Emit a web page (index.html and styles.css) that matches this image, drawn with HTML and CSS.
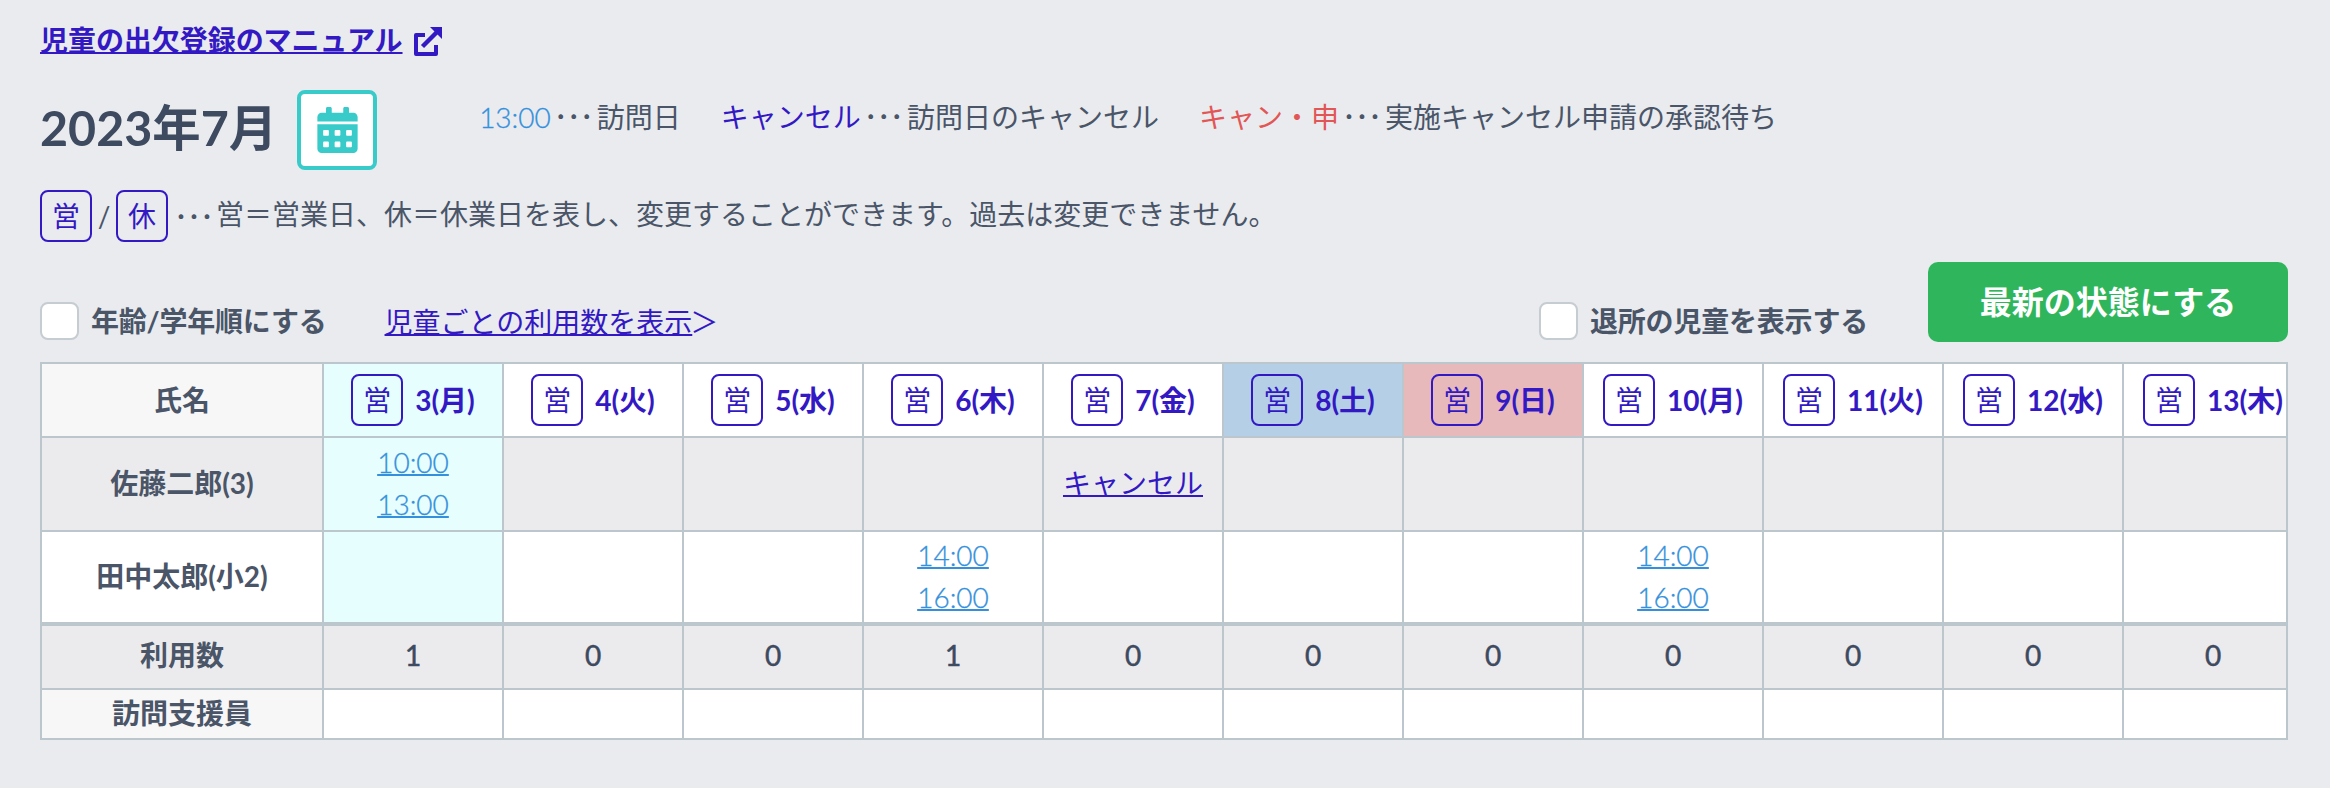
FILE: index.html
```html
<!DOCTYPE html>
<html lang="ja">
<head>
<meta charset="utf-8">
<title>児童の出欠登録</title>
<link rel="stylesheet" href="styles.css">
</head>
<body>
<main class="page">
  <div class="manual-row">
    <a class="manual-link" href="#">児童の出欠登録のマニュアル</a>
    <svg class="ext-icon" viewBox="0 0 29 29" aria-hidden="true"><path d="M12 8H3v19h20v-9" fill="none" stroke="currentColor" stroke-width="4" stroke-linejoin="round"/><path d="M9.500 19.500 24 5" fill="none" stroke="currentColor" stroke-width="4.500"/><path d="M17 0h12v12z" fill="currentColor"/></svg>
  </div>
  <div class="title-row">
    <h1 class="month">2023年7月</h1>
    <button class="cal-btn" type="button">
      <svg class="cal-icon" viewBox="0 0 448 512" aria-hidden="true"><path fill="currentColor" d="M0 464c0 26.5 21.5 48 48 48h352c26.5 0 48-21.5 48-48V192H0v272zm320-196c0-6.600 5.400-12 12-12h40c6.600 0 12 5.400 12 12v40c0 6.600-5.400 12-12 12h-40c-6.600 0-12-5.400-12-12v-40zm0 128c0-6.600 5.400-12 12-12h40c6.600 0 12 5.400 12 12v40c0 6.600-5.400 12-12 12h-40c-6.600 0-12-5.400-12-12v-40zM192 268c0-6.600 5.400-12 12-12h40c6.600 0 12 5.400 12 12v40c0 6.600-5.400 12-12 12h-40c-6.600 0-12-5.400-12-12v-40zm0 128c0-6.600 5.400-12 12-12h40c6.600 0 12 5.400 12 12v40c0 6.600-5.400 12-12 12h-40c-6.600 0-12-5.400-12-12v-40zM64 268c0-6.600 5.400-12 12-12h40c6.600 0 12 5.400 12 12v40c0 6.600-5.400 12-12 12H76c-6.600 0-12-5.400-12-12v-40zm0 128c0-6.600 5.400-12 12-12h40c6.600 0 12 5.400 12 12v40c0 6.600-5.400 12-12 12H76c-6.600 0-12-5.400-12-12v-40zM400 64h-48V16c0-8.800-7.200-16-16-16h-32c-8.800 0-16 7.200-16 16v48H160V16c0-8.800-7.200-16-16-16h-32c-8.800 0-16 7.200-16 16v48H48C21.500 64 0 85.500 0 112v48h448v-48c0-26.500-21.500-48-48-48z"/></svg>
    </button>
    <div class="legend">
      <span class="item"><span class="time">13:00</span><span class="dots">･･･</span>訪問日</span>
      <span class="item"><span class="cancel">キャンセル</span><span class="dots">･･･</span>訪問日のキャンセル</span>
      <span class="item"><span class="pending">キャン・申</span><span class="dots">･･･</span>実施キャンセル申請の承認待ち</span>
    </div>
  </div>
  <div class="note-row">
    <span class="badge">営</span><span class="slash">/</span><span class="badge">休</span><span class="dots dots-note">･･･</span><span class="note">営＝営業日、休＝休業日を表し、変更することができます。過去は変更できません。</span>
  </div>
  <div class="toolbar">
    <div class="tool-left">
      <label class="check"><span class="box"></span>年齢/学年順にする</label>
      <a class="count-link" href="#"><span class="count-text">児童ごとの利用数を表示</span><span class="count-arrow">＞</span></a>
    </div>
    <div class="tool-right">
      <label class="check"><span class="box"></span>退所の児童を表示する</label>
      <button class="refresh" type="button">最新の状態にする</button>
    </div>
  </div>
  <div class="sheet-wrap">
  <table class="sheet">
    <colgroup><col class="c-name"><col class="c-day"><col class="c-day"><col class="c-day"><col class="c-day"><col class="c-day"><col class="c-day"><col class="c-day"><col class="c-day"><col class="c-day"><col class="c-day"><col class="c-day"></colgroup>
    <thead>
      <tr class="r-head">
        <th class="name head-name">氏名</th>
        <th class="today"><div class="day"><span class="badge">営</span><span>3(月)</span></div></th>
        <th><div class="day"><span class="badge">営</span><span>4(火)</span></div></th>
        <th><div class="day"><span class="badge">営</span><span>5(水)</span></div></th>
        <th><div class="day"><span class="badge">営</span><span>6(木)</span></div></th>
        <th><div class="day"><span class="badge">営</span><span>7(金)</span></div></th>
        <th class="sat"><div class="day"><span class="badge">営</span><span>8(土)</span></div></th>
        <th class="sun"><div class="day"><span class="badge">営</span><span>9(日)</span></div></th>
        <th><div class="day"><span class="badge">営</span><span>10(月)</span></div></th>
        <th><div class="day"><span class="badge">営</span><span>11(火)</span></div></th>
        <th><div class="day"><span class="badge">営</span><span>12(水)</span></div></th>
        <th><div class="day"><span class="badge">営</span><span>13(木)</span></div></th>
      </tr>
    </thead>
    <tbody>
      <tr class="r-one grey">
        <th class="name">佐藤二郎(3)</th>
        <td class="today"><a class="slot" href="#">10:00</a><a class="slot" href="#">13:00</a></td>
        <td></td><td></td><td></td>
        <td><a class="slot-cancel" href="#">キャンセル</a></td>
        <td></td><td></td><td></td><td></td><td></td><td></td>
      </tr>
      <tr class="r-two">
        <th class="name">田中太郎(小2)</th>
        <td class="today"></td><td></td><td></td>
        <td><a class="slot" href="#">14:00</a><a class="slot" href="#">16:00</a></td>
        <td></td><td></td><td></td>
        <td><a class="slot" href="#">14:00</a><a class="slot" href="#">16:00</a></td>
        <td></td><td></td><td></td>
      </tr>
      <tr class="r-count grey">
        <th class="name">利用数</th>
        <td>1</td><td>0</td><td>0</td><td>1</td><td>0</td><td>0</td><td>0</td><td>0</td><td>0</td><td>0</td><td>0</td>
      </tr>
      <tr class="r-staff">
        <th class="name head-name">訪問支援員</th>
        <td></td><td></td><td></td><td></td><td></td><td></td><td></td><td></td><td></td><td></td><td></td>
      </tr>
    </tbody>
  </table>
  </div>
</main>
</body>
</html>
```

FILE: styles.css
```css
* { box-sizing: border-box; }
html, body { margin: 0; padding: 0; }
body {
  background: #e9ebef;
  color: #4a5568;
  font-family: Lato, "Noto Sans CJK JP", sans-serif;
  font-size: 28px;
  line-height: 1.5;
}
a { color: inherit; text-decoration-thickness: 2px; }
.page { padding: 20px 42px 0 40px; height: 788px; overflow: hidden; }

.manual-row { display: flex; align-items: center; gap: 10px; height: 40px; color: #3319c4; }
.manual-link { font-weight: 700; font-size: 28px; line-height: 40px; letter-spacing: -0.05px; }
.ext-icon { width: 29px; height: 29px; flex: none; margin-top: 2px; }

.title-row { display: flex; align-items: flex-start; margin-top: 30px; }
.month { margin: 0; font-size: 48.4px; line-height: 74px; font-weight: 700; color: #3d4a5f; white-space: nowrap; }
.cal-btn {
  width: 80px; height: 80px; margin-left: 20px; padding: 0;
  display: flex; align-items: center; justify-content: center;
  background: #fff; border: 4px solid #38cbc9; border-radius: 8px; color: #38cbc9;
}
.cal-icon { width: 41px; height: 46px; }
.legend { display: flex; gap: 40px; margin-left: 102px; line-height: 52px; white-space: nowrap; }
.time { color: #3490dc; font-weight: 300; -webkit-text-stroke: 0.3px #3490dc; }
.cancel { color: #3319c4; }
.pending { color: #e25656; }
.dots { font-family: "Noto Sans CJK JP", sans-serif; margin: 0 4px 0 3px; letter-spacing: -1px; }

.note-row { display: flex; align-items: center; height: 52px; margin-top: 20px; }
.badge {
  display: inline-flex; align-items: center; justify-content: center;
  width: 52px; height: 52px; flex: none;
  border: 2px solid #3319c4; border-radius: 8px;
  color: #3319c4; font-size: 28px; font-weight: 400; line-height: 1;
}
.slash { width: 24px; text-align: center; font-weight: 400; }
.dots-note { margin: 0 3px 0 6px; }
.note { line-height: 48px; margin-bottom: 4px; }

.toolbar { display: flex; justify-content: space-between; align-items: flex-end; height: 80px; margin-top: 20px; }
.tool-left, .tool-right { display: flex; align-items: flex-end; }
.tool-left { padding-bottom: 2px; }
.tool-left .count-link { margin-left: 58px; }
.tool-right .check { margin-bottom: 2px; margin-right: 60px; }
.check { display: flex; align-items: center; gap: 12px; height: 38px; font-weight: 700; line-height: 34px; color: #4a5568; letter-spacing: -0.2px; }
.box { width: 39px; height: 38px; background: #fff; border: 2px solid #c5ccd2; border-radius: 8px; flex: none; }
.count-link { color: #3319c4; line-height: 36px; text-decoration: none; white-space: nowrap; display: flex; }
.count-text { text-decoration: underline; text-decoration-thickness: 2px; }
.count-arrow { width: 26px; margin-left: -2px; text-align: left; }
.refresh {
  width: 360px; height: 80px; border: 0; border-radius: 10px; padding: 0 0 5px;
  background: #2fb65c; color: #fff;
  font: 700 32px Lato, "Noto Sans CJK JP", sans-serif;
}

.sheet-wrap { width: 2248px; margin-top: 20px; overflow: hidden; border-right: 2px solid #bcc6cd; }
.sheet { border-collapse: collapse; table-layout: fixed; width: 2264px; background: #fff; }
.c-name { width: 282px; }
.c-day { width: 180px; }
.sheet th, .sheet td { border: 2px solid #bcc6cd; padding: 0; text-align: center; }
.sheet th { font-weight: 700; }
.r-head th { padding: 0 20px; color: #3319c4; }
.r-head .name { color: #4a5568; }
.r-head { height: 74px; }
.r-one { height: 94px; }
.r-two { height: 93px; }
.r-count { height: 65px; }
.r-staff { height: 50px; }
.r-count th, .r-count td { border-top-width: 4px; padding-bottom: 4px; }
.r-count td { color: #3d4a5f; -webkit-text-stroke: 0.5px #3d4a5f; }
.r-one th, .r-one td, .r-two th, .r-two td { padding-bottom: 2px; }
.r-staff th { padding-bottom: 2px; }
.name { color: #4a5568; }
.head-name { background: #f7f7f7; }
.grey th, .grey td { background: #ebebed; }
.sheet .today { background: #e6fefe; }
.sheet .sat { background: #b5d0e6; }
.sheet .sun { background: #e8b9bb; }
.day { display: flex; align-items: center; justify-content: center; gap: 12px; white-space: nowrap; }
.slot { display: block; width: max-content; margin: 0 auto; color: #3490dc; -webkit-text-stroke: 0.3px #3490dc; font-weight: 300; line-height: 42px; }
.slot-cancel { color: #3319c4; }
```
